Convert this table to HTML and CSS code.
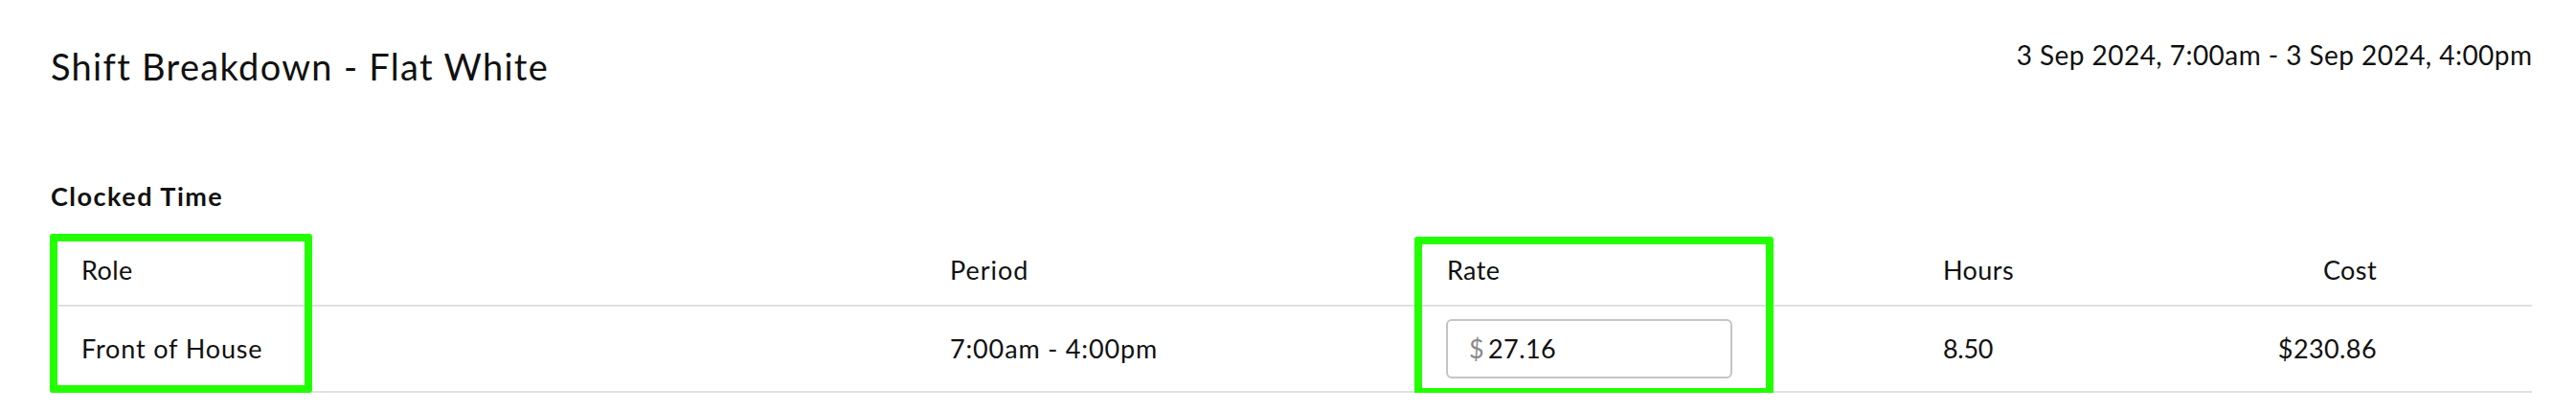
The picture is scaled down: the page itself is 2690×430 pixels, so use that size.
FILE: index.html
```html
<!DOCTYPE html>
<html lang="en">
<head>
<meta charset="utf-8">
<title>Shift Breakdown - Flat White</title>
<link rel="stylesheet" href="styles.css">
</head>
<body>
<div class="page">
  <header class="page-header">
    <h1 class="title">Shift Breakdown - Flat White</h1>
    <div class="range">3 Sep 2024, 7:00am - 3 Sep 2024, 4:00pm</div>
  </header>
  <section class="section">
    <h2 class="section-title">Clocked Time</h2>
    <div class="table">
      <div class="row head">
        <div class="cell c-role">Role</div>
        <div class="cell c-period">Period</div>
        <div class="cell c-rate">Rate</div>
        <div class="cell c-hours">Hours</div>
        <div class="cell c-cost">Cost</div>
        <div class="cell c-extra"></div>
      </div>
      <div class="row body">
        <div class="cell c-role">Front of House</div>
        <div class="cell c-period">7:00am - 4:00pm</div>
        <div class="cell c-rate">
          <label class="money-input"><span class="currency">$</span><span class="amount">27.16</span></label>
        </div>
        <div class="cell c-hours">8.50</div>
        <div class="cell c-cost">$230.86</div>
        <div class="cell c-extra"></div>
      </div>
      <div class="highlight hl-role"></div>
      <div class="highlight hl-rate"></div>
    </div>
  </section>
</div>
</body>
</html>
```
FILE: styles.css
```css
html, body {
  margin: 0;
  padding: 0;
  background: #ffffff;
}

body {
  font-family: "Lato", "Noto Sans", sans-serif;
  color: #111111;
}

.page {
  padding: 0 46px 0 53px;
}

.page-header {
  display: flex;
  justify-content: space-between;
  align-items: flex-start;
  padding-top: 40px;
}

.title {
  margin: 0;
  font-size: 38px;
  line-height: 58px;
  font-weight: 400;
  letter-spacing: 1.3px;
}

.range {
  font-size: 28px;
  line-height: 34px;
  letter-spacing: 0.45px;
  margin-right: -0.45px;
}

.section-title {
  margin: 92px 0 0 0;
  font-size: 27px;
  line-height: 30px;
  font-weight: 700;
  letter-spacing: 1.5px;
}

.table {
  position: relative;
  margin-top: 26px;
}

.row {
  display: grid;
  grid-template-columns: 907px 519px 518px 303px 214px 1fr;
  align-items: center;
  border-bottom: 2px solid #e0e0e0;
  font-size: 27px;
  line-height: 32px;
  letter-spacing: 0.4px;
}

.row.head {
  padding: 20px 0;
}

.row.head .c-period {
  letter-spacing: 1px;
}

.row.body {
  padding: 13px 0;
  min-height: 62px;
}

.row.body .c-role,
.row.body .c-period {
  letter-spacing: 0.85px;
}

.row.body .c-hours {
  letter-spacing: -0.3px;
}

.cell {
  padding: 0 32px;
}

.c-cost {
  text-align: right;
}

.money-input {
  display: flex;
  align-items: center;
  box-sizing: border-box;
  width: 299px;
  height: 62px;
  margin-left: -1px;
  padding: 0 22px;
  border: 2px solid #c4c4c4;
  border-radius: 6px;
}

.currency {
  color: #8a8a8a;
  margin-right: 4px;
}

.highlight {
  position: absolute;
  box-sizing: border-box;
  border: 8px solid #22ff00;
  border-radius: 3px;
  pointer-events: none;
}

.hl-role {
  left: -1px;
  top: -2px;
  width: 274px;
  height: 166px;
}

.hl-rate {
  left: 1424px;
  top: 1px;
  width: 375px;
  height: 166px;
}
```
